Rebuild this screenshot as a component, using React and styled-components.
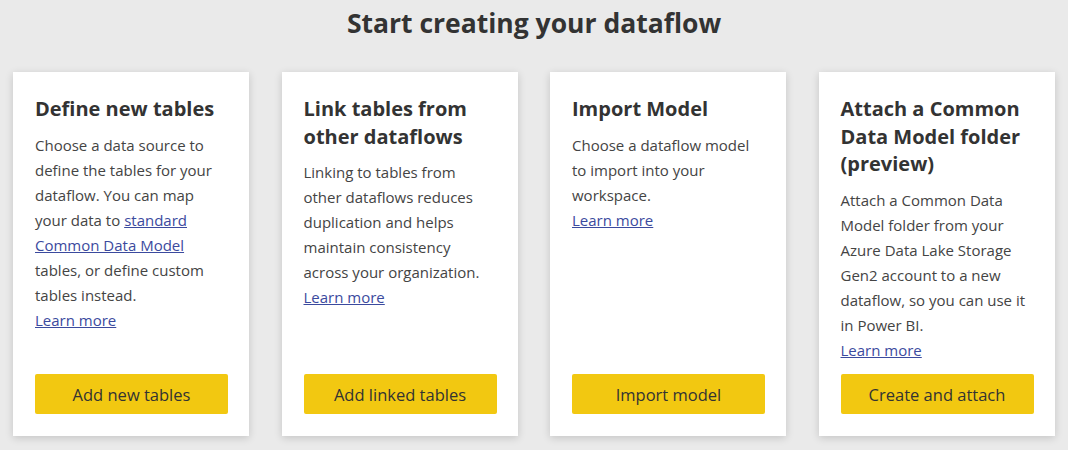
import styled, { createGlobalStyle } from 'styled-components';

const GlobalStyle = createGlobalStyle`
  html, body {
    margin: 0;
    padding: 0;
    background: #eaeaea;
    font-family: "Open Sans", "Noto Sans", sans-serif;
    color: #333;
  }
`;

const Page = styled.div`
  display: flex;
  flex-direction: column;
  height: 450px;
  overflow: hidden;
`;

const Heading = styled.h1`
  margin: 5px 0 0;
  text-align: center;
  font-size: 26.5px;
  line-height: 36px;
  font-weight: 700;
  color: #333;
`;

const Grid = styled.div`
  display: grid;
  grid-template-columns: repeat(4, 236px);
  column-gap: 32.5px;
  padding: 0 0 0 13px;
  margin-top: 31px;
`;

const Card = styled.section`
  display: flex;
  flex-direction: column;
  height: 364px;
  box-sizing: border-box;
  padding: 23px 21px 22px 22px;
  background: #fff;
  box-shadow: 0 2px 8px rgba(0, 0, 0, 0.16);
`;

const Title = styled.h2`
  margin: 0 0 10px;
  font-size: 20px;
  line-height: 27.5px;
  font-weight: 700;
  color: #333;
`;

const Body = styled.p`
  margin: 0;
  font-size: 15px;
  line-height: 25px;
  color: #444;
`;

const Link = styled.a`
  color: #3b4a9e;
  text-decoration: underline;
  cursor: pointer;
`;

const Button = styled.button`
  margin-top: auto;
  height: 40px;
  width: 100%;
  border: none;
  border-radius: 2px;
  background: #f2c811;
  color: #333;
  font-family: inherit;
  font-size: 16.5px;
  cursor: pointer;
`;

const cards = [
  {
    title: 'Define new tables',
    body: (
      <>
        Choose a data source to define the tables for your dataflow. You can map your data to{' '}
        <Link>standard Common Data Model</Link> tables, or define custom tables instead.
      </>
    ),
    action: 'Add new tables',
  },
  {
    title: 'Link tables from other dataflows',
    body: 'Linking to tables from other dataflows reduces duplication and helps maintain consistency across your organization.',
    action: 'Add linked tables',
  },
  {
    title: 'Import Model',
    body: 'Choose a dataflow model to import into your workspace.',
    action: 'Import model',
  },
  {
    title: 'Attach a Common Data Model folder (preview)',
    body: 'Attach a Common Data Model folder from your Azure Data Lake Storage Gen2 account to a new dataflow, so you can use it in Power BI.',
    action: 'Create and attach',
  },
];

export default function App() {
  return (
    <>
      <GlobalStyle />
      <Page>
        <Heading>Start creating your dataflow</Heading>
        <Grid>
          {cards.map((c) => (
            <Card key={c.title}>
              <Title>{c.title}</Title>
              <Body>
                {c.body}
                <br />
                <Link>Learn more</Link>
              </Body>
              <Button>{c.action}</Button>
            </Card>
          ))}
        </Grid>
      </Page>
    </>
  );
}
